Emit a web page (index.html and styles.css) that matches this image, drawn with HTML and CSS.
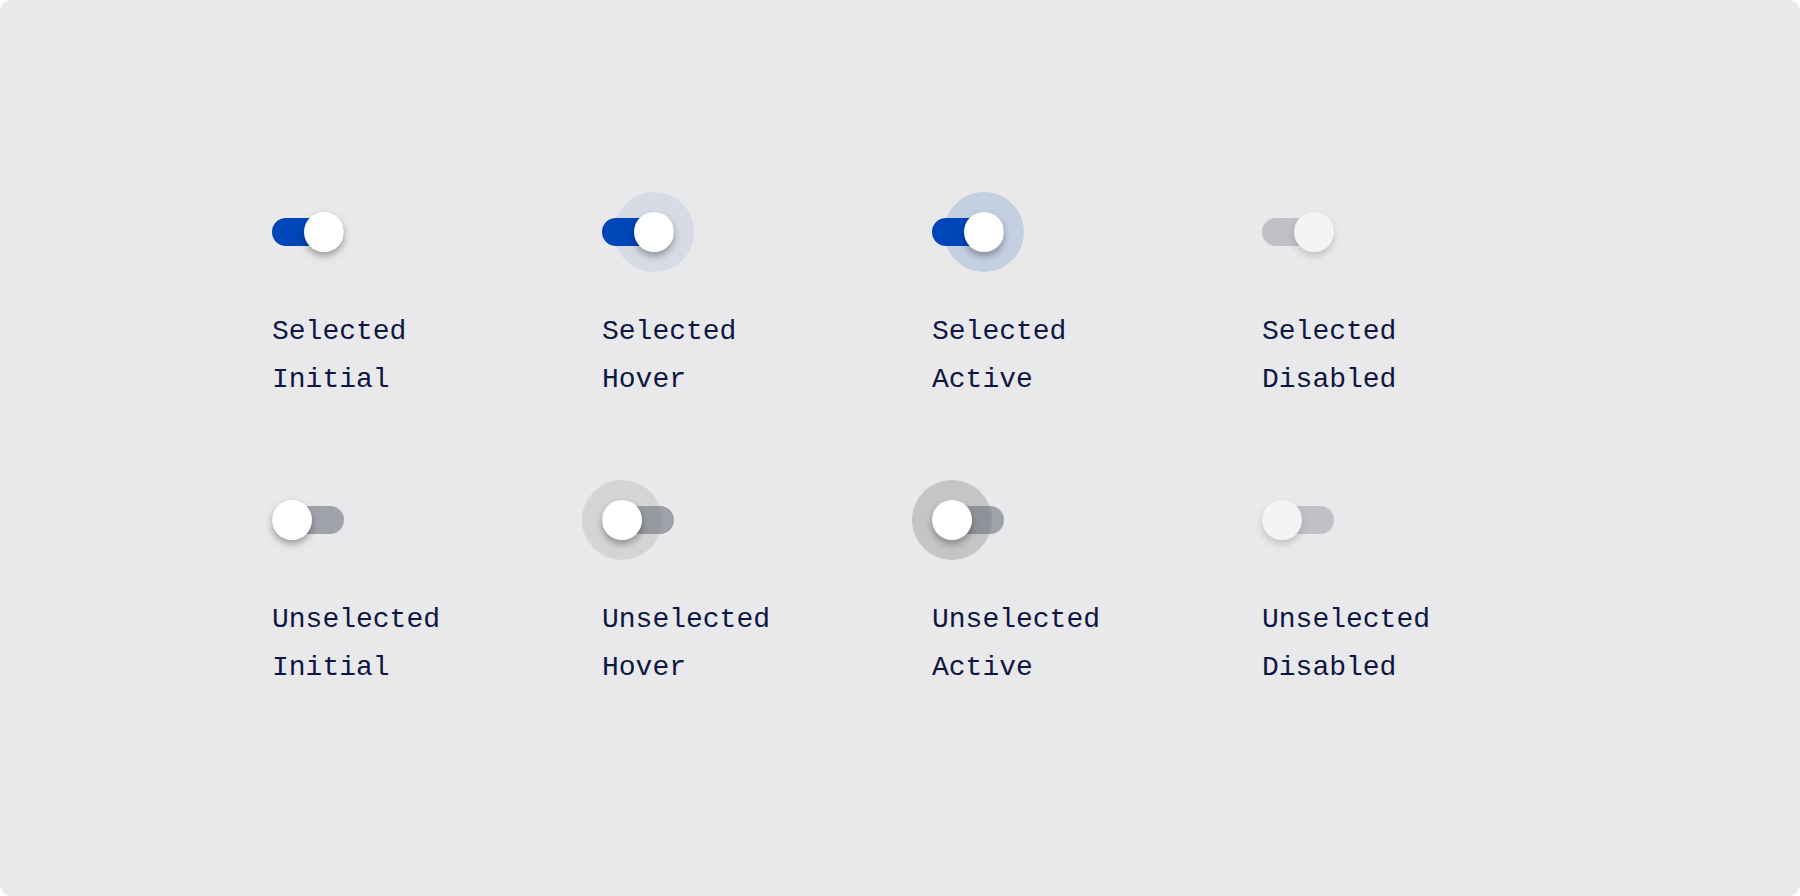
FILE: index.html
```html
<!DOCTYPE html>
<html>
<head>
<meta charset="utf-8">
<link rel="stylesheet" href="styles.css">
</head>
<body>
<div class="panel">
  <div class="grid">
    <div class="cell">
      <div class="switch on"><span class="track"></span><span class="thumb"></span></div>
      <div class="label">Selected<br>Initial</div>
    </div>
    <div class="cell">
      <div class="switch on hover"><span class="halo"></span><span class="track"></span><span class="thumb"></span></div>
      <div class="label">Selected<br>Hover</div>
    </div>
    <div class="cell">
      <div class="switch on active"><span class="halo"></span><span class="track"></span><span class="thumb"></span></div>
      <div class="label">Selected<br>Active</div>
    </div>
    <div class="cell">
      <div class="switch on disabled"><span class="track"></span><span class="thumb"></span></div>
      <div class="label">Selected<br>Disabled</div>
    </div>
    <div class="cell">
      <div class="switch off"><span class="track"></span><span class="thumb"></span></div>
      <div class="label">Unselected<br>Initial</div>
    </div>
    <div class="cell">
      <div class="switch off hover"><span class="halo"></span><span class="track"></span><span class="thumb"></span></div>
      <div class="label">Unselected<br>Hover</div>
    </div>
    <div class="cell">
      <div class="switch off active"><span class="halo"></span><span class="track"></span><span class="thumb"></span></div>
      <div class="label">Unselected<br>Active</div>
    </div>
    <div class="cell">
      <div class="switch off disabled"><span class="track"></span><span class="thumb"></span></div>
      <div class="label">Unselected<br>Disabled</div>
    </div>
  </div>
</div>
</body>
</html>
```
FILE: styles.css
```css
html, body {
  margin: 0;
  padding: 0;
  background: #ffffff;
}
.panel {
  width: 1800px;
  height: 896px;
  background: #e9e9ec;
  border-radius: 12px;
  box-sizing: border-box;
  padding: 212px 0 0 272px;
  overflow: hidden;
}
.grid {
  display: grid;
  grid-template-columns: repeat(4, 330px);
  row-gap: 96.5px;
}
.cell {
  display: flex;
  flex-direction: column;
}
.switch {
  position: relative;
  width: 72px;
  height: 40px;
  margin-bottom: 55.5px;
}
.track {
  position: absolute;
  left: 0;
  top: 6px;
  width: 72px;
  height: 28px;
  border-radius: 14px;
  background: #0046b8;
}
.thumb {
  position: absolute;
  top: 0;
  width: 40px;
  height: 40px;
  border-radius: 50%;
  background: #ffffff;
  box-shadow: 0 4px 7px rgba(0, 0, 0, 0.32);
}
.halo {
  position: absolute;
  top: -20px;
  width: 80px;
  height: 80px;
  border-radius: 50%;
}
.on .thumb { left: 32px; }
.on .halo { left: 12px; }
.off .thumb { left: 0; }
.off .halo { left: -20px; }
.off .track { background: rgba(104, 107, 118, 0.56); }
.on.hover .halo { background: #d6dbe6; }
.on.active .halo { background: #c4cfe1; }
.off.hover .halo { background: #d5d5d8; }
.off.active .halo { background: #c5c5c7; }
.disabled .track { background: #c0c1c6; }
.disabled .thumb { background: #f4f4f5; box-shadow: 0 4px 7px rgba(0, 0, 0, 0.16); }
.label {
  font-family: "Liberation Mono", "Courier New", monospace;
  font-size: 28px;
  line-height: 48px;
  color: #0d1742;
  white-space: nowrap;
}
```
